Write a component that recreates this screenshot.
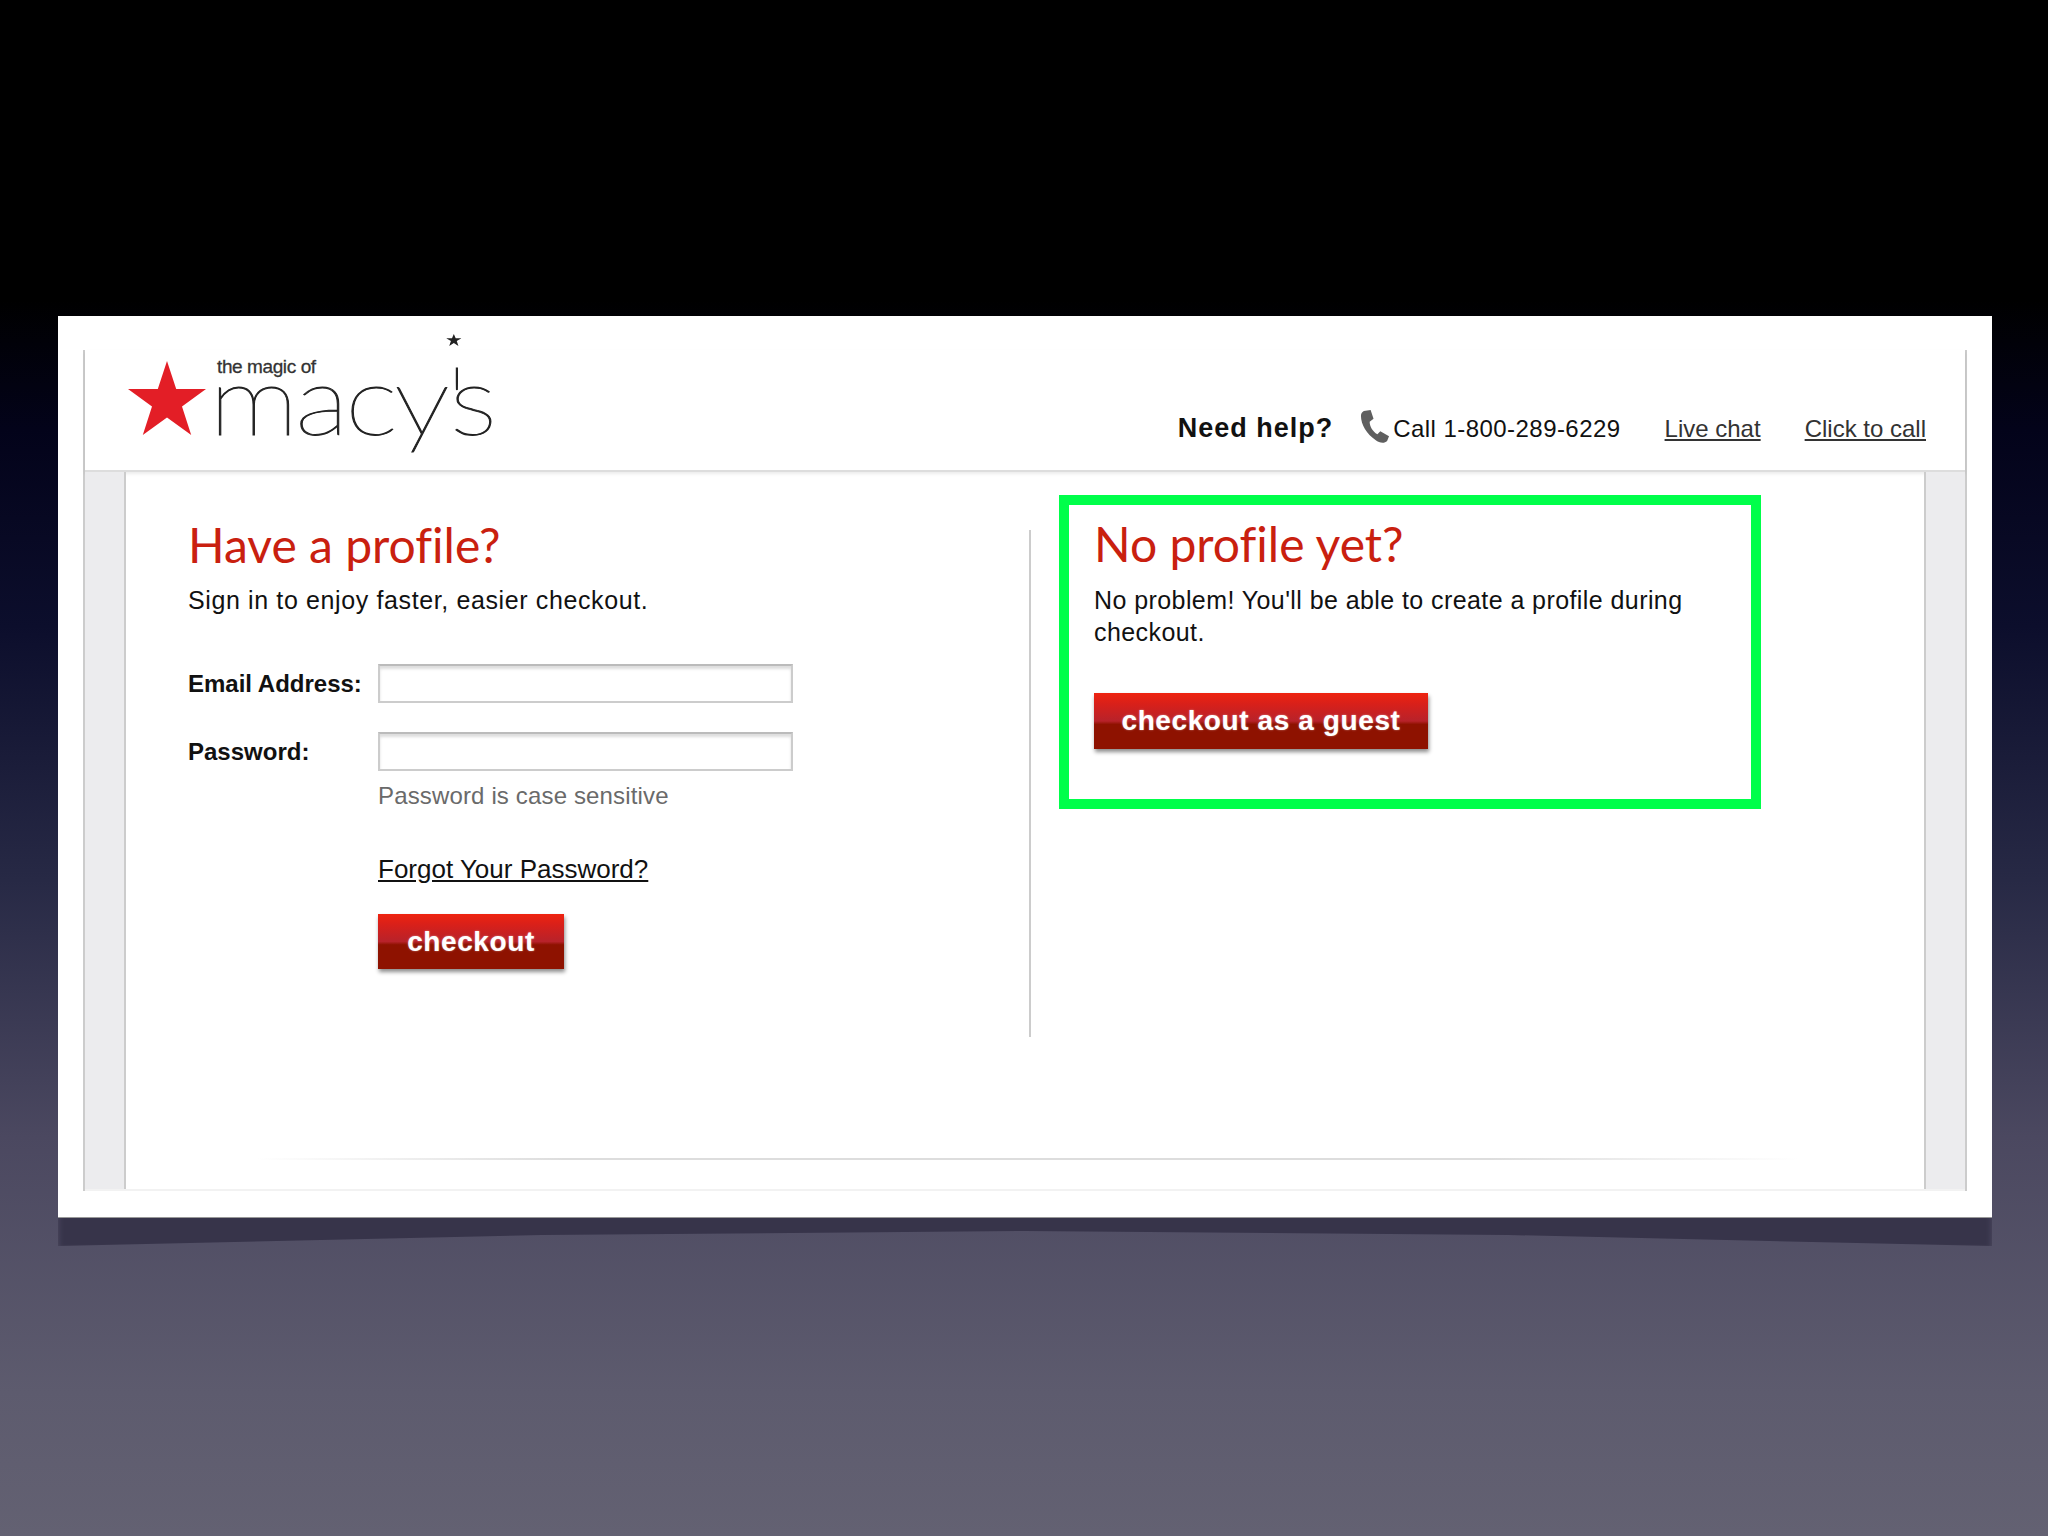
<script>
</script>

<div class="slide">
  <div class="shadow"></div>
  <div class="card">
    <div class="frame">
      <header>
        <div class="logo">
          <svg class="star" viewBox="0 0 78 74" width="78" height="74">
            <polygon fill="#e31e26" points="39,0 48.2,28 78,28 54,45.4 63.2,74 39,56.6 14.8,74 24,45.4 0,28 29.8,28" />
          </svg>
          <div class="wordmark">
            <span class="tag">the magic of</span>
            <span class="name">macy<span class="apos">'</span>s</span>
          </div>
        </div>
        <div class="help">
          <strong>Need help?</strong>
          <span class="call">
            <svg viewBox="0 0 32 34" width="31" height="33">
              <path fill="#5f5f5f" d="M5 1 L12 0 L15 9 L11 12 C11 17 14 22 19 25 L22 22 L31 27 L29 32 C26 35 21 34 17 31 C8 25 2 15 2 6 C2 4 3 2 5 1 Z" />
            </svg><span class="number">Call 1-800-289-6229</span>
          </span>
          <a href="#chat">Live chat</a>
          <a href="#call">Click to call</a>
        </div>
      </header>

      <div class="body">
        <div class="side"></div>
        <main>
          <div class="columns">
            <section class="signin">
              <h1>Have a profile?</h1>
              <p>Sign in to enjoy faster, easier checkout.</p>
              <div class="form">
                <label for="email">Email Address:</label>
                <input id="email" type="text" />
                <label for="password">Password:</label>
                <input id="password" type="password" />
                <span class="hint">Password is case sensitive</span>
                <a class="forgot" href="#forgot">Forgot Your Password?</a>
                <button class="checkout">checkout</button>
              </div>
            </section>
            <div class="divider"></div>
            <section class="guest">
              <h1>No profile yet?</h1>
              <p>No problem! You'll be able to create a profile during checkout.</p>
              <button class="as-guest">checkout as a guest</button>
            </section>
          </div>
          <div class="rule"></div>
        </main>
        <div class="side"></div>
      </div>
    </div>
  </div>
</div>

<style>
  :global(body) {
    margin: 0;
    background: #000;
  }
  .slide {
    position: relative;
    width: 2048px;
    height: 1536px;
    padding: 316px 56px 0 58px;
    box-sizing: border-box;
    overflow: hidden;
    background: linear-gradient(180deg, #000 0, #000 300px, #03031a 430px, #0c0e2c 626px, #272945 880px, #4b4860 1137px, #5d5b6e 1392px, #636172 1536px);
    font-family: "Liberation Sans", Arial, sans-serif;
    color: #111;
  }
  .shadow {
    position: absolute;
    left: 58px;
    top: 1200px;
    width: 1934px;
    height: 50px;
    background: #37344a;
    clip-path: polygon(0 0, 100% 0, 100% 92%, 75% 70%, 50% 62%, 25% 70%, 0 92%);
    filter: blur(3px);
  }
  .card {
    position: relative;
    height: 902px;
    padding: 34px 25px 26px;
    box-sizing: border-box;
    background: #fff;
    border-bottom: 1px solid #999;
  }
  .frame {
    height: 100%;
    display: flex;
    flex-direction: column;
    border-left: 2px solid #ccc;
    border-right: 2px solid #ccc;
    box-sizing: border-box;
  }
  header {
    height: 122px;
    flex: none;
    display: flex;
    justify-content: space-between;
    align-items: flex-end;
    box-sizing: border-box;
    padding: 0 39px 26px 43px;
    border-bottom: 2px solid #ddd;
    box-shadow: 0 2px 3px rgba(0, 0, 0, 0.08);
  }
  .logo {
    display: flex;
    align-self: flex-start;
    margin-top: 11px;
    gap: 11px;
  }
  .wordmark {
    display: flex;
    flex-direction: column;
    font-family: Lato, sans-serif;
  }
  .tag {
    margin-top: -3px;
    font-family: "Liberation Sans", sans-serif;
    font-size: 19px;
    letter-spacing: -0.4px;
    line-height: 18px;
    color: #333;
    -webkit-text-stroke: 0.3px #333;
  }
  .name {
    display: block;
    margin-left: -8px;
    font-size: 96px;
    font-weight: 100;
    line-height: 44px;
    letter-spacing: -3px;
    color: #222;
    -webkit-text-stroke: 0.9px #222;
    transform: scaleX(1.18);
    transform-origin: left center;
  }
  .apos {
    position: relative;
    margin-right: -12px;
  }
  .apos::before {
    content: "";
    position: absolute;
    left: 0;
    top: -6px;
    width: 13px;
    height: 12px;
    background: #222;
    clip-path: polygon(50% 0, 62% 36%, 100% 36%, 69% 58%, 80% 100%, 50% 74%, 20% 100%, 31% 58%, 0 36%, 38% 36%);
  }
  .help {
    display: flex;
    align-items: baseline;
    font-size: 24px;
  }
  .help strong {
    margin-right: 26px;
    font-size: 27px;
    letter-spacing: 1px;
    color: #111;
  }
  .call {
    margin-right: 44px;
  }
  .call svg {
    vertical-align: -6px;
    margin-right: 3px;
  }
  .number {
    letter-spacing: 0.45px;
  }
  .help a {
    color: #333;
    margin-right: 44px;
  }
  .help a:last-child {
    margin-right: 0;
  }
  .body {
    flex: 1;
    display: grid;
    grid-template-columns: 41px 1fr 41px;
    border-bottom: 2px solid #f2f2f2;
  }
  .side {
    background: #ececee;
  }
  .side:first-child {
    border-right: 2px solid #ccc;
  }
  .side:last-child {
    border-left: 2px solid #ccc;
  }
  main {
    display: flex;
    flex-direction: column;
  }
  .columns {
    display: flex;
    padding: 23px 0 0 62px;
    height: 686px;
    box-sizing: border-box;
  }
  .signin {
    width: 841px;
    padding-top: 22px;
  }
  h1 {
    margin: 0;
    font-family: Lato, sans-serif;
    font-weight: 400;
    font-size: 48px;
    line-height: 56px;
    font-variant-ligatures: none;
    color: #c9200f;
  }
  p {
    margin: 0;
    font-size: 25px;
    line-height: 32px;
    color: #111;
  }
  .signin p {
    margin-top: 11px;
    letter-spacing: 0.62px;
  }
  .form {
    margin-top: 48px;
    display: grid;
    grid-template-columns: 190px 415px;
    row-gap: 29px;
    align-items: center;
  }
  label {
    font-size: 24px;
    font-weight: 700;
  }
  input {
    height: 39px;
    box-sizing: border-box;
    border: 2px solid #ccc;
    border-top-color: #bbb;
    box-shadow: inset 0 3px 3px #ddd;
    background: #fff;
  }
  .hint,
  .forgot,
  .checkout {
    grid-column: 2;
  }
  .hint {
    margin-top: -18px;
    font-size: 24px;
    letter-spacing: 0.15px;
    line-height: 28px;
    color: #6a6a6a;
  }
  .forgot {
    margin-top: 15px;
    font-size: 26px;
    line-height: 30px;
    color: #111;
  }
  button {
    height: 55px;
    border: none;
    padding: 0;
    font-family: "Liberation Sans", sans-serif;
    font-weight: 700;
    font-size: 28px;
    letter-spacing: 0.6px;
    color: #fff;
    background: linear-gradient(180deg, #ee2310 0%, #d8201a 20%, #b8222a 50%, #8e1200 56%, #8e1200 100%);
    box-shadow: 1px 3px 4px rgba(0, 0, 0, 0.45);
    text-shadow: 0 0 2px rgba(255, 255, 255, 0.5);
  }
  .checkout {
    width: 186px;
    margin-top: 1px;
  }
  .divider {
    width: 2px;
    height: 507px;
    margin-top: 35px;
    background: #ccc;
  }
  .guest {
    width: 702px;
    height: 314px;
    margin-left: 28px;
    padding: 11px 26px 0 25px;
    box-sizing: border-box;
    border: 10px solid #00ff4a;
  }
  .guest p {
    margin-top: 12px;
    letter-spacing: 0.42px;
  }
  .as-guest {
    display: block;
    width: 334px;
    height: 56px;
    margin-top: 45px;
  }
  .rule {
    height: 2px;
    margin: 0 126px 0 130px;
    background: linear-gradient(90deg, transparent, #ddd 20%, #ddd 80%, transparent);
  }
</style>
